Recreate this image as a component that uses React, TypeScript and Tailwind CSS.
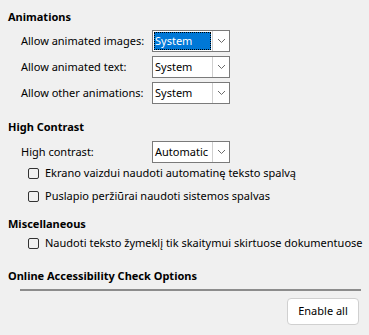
import React from "react";

function Chevron() {
  return (
    <svg width="9" height="6" viewBox="0 0 9 6" className="text-[#6b6b6b]">
      <path d="M1 1l3.5 3.5L8 1" fill="none" stroke="currentColor" strokeWidth="1" />
    </svg>
  );
}

function Combo({ value, focused }: { value: string; focused?: boolean }) {
  return (
    <div className="flex h-[22px] w-[78px] border border-[#7a7a7a] bg-white">
      <div className="flex-1 p-[1px]">
        <div
          className={
            focused
              ? "h-full bg-[#0078d7] text-white outline-1 outline-dotted outline-black -outline-offset-1 pl-[1px] leading-[18px]"
              : "h-full pl-[1px] leading-[18px]"
          }
        >
          {value}
        </div>
      </div>
      <div className="flex w-[17px] items-center justify-center border-l border-[#cfcfcf]">
        <Chevron />
      </div>
    </div>
  );
}

function Check({ label }: { label: string }) {
  return (
    <div className="flex h-[20px] items-center gap-[6px] pl-[20px] whitespace-nowrap">
      <div className="h-[11px] w-[11px] shrink-0 rounded-[2px] border border-[#333]" />
      <span>{label}</span>
    </div>
  );
}

function Heading({ children, className }: { children: React.ReactNode; className?: string }) {
  return <div className={"h-[16px] leading-[16px] font-bold " + (className ?? "")}>{children}</div>;
}

export default function App() {
  const rows = [
    ["Allow animated images:", "System", true],
    ["Allow animated text:", "System", false],
    ["Allow other animations:", "System", false],
  ] as const;

  return (
    <div
      className="flex h-[335px] w-[369px] flex-col bg-[#f0f0f0] pl-[8px] pt-[9px] pr-[10px] text-[11px] text-black"
      style={{ fontFamily: '"Noto Sans", sans-serif' }}
    >
      <Heading>Animations</Heading>
      <div className="mt-[5px] flex flex-col gap-[4px]">
        {rows.map(([label, value, focused]) => (
          <div key={label} className="flex items-center">
            <span className="w-[144px] pl-[13px]">{label}</span>
            <Combo value={value} focused={focused} />
          </div>
        ))}
      </div>

      <Heading className="mt-[15px]">High Contrast</Heading>
      <div className="mt-[6px] flex items-center">
        <span className="w-[144px] pl-[13px]">High contrast:</span>
        <Combo value="Automatic" />
      </div>
      <Check label="Ekrano vaizdui naudoti automatinę teksto spalvą" />
      <div className="mt-[3px]">
        <Check label="Puslapio peržiūrai naudoti sistemos spalvas" />
      </div>

      <Heading className="mt-[10px]">Miscellaneous</Heading>
      <div className="mt-[1px]">
        <Check label="Naudoti teksto žymeklį tik skaitymui skirtuose dokumentuose" />
      </div>

      <Heading className="mt-[15px]">Online Accessibility Check Options</Heading>
      <div className="ml-[12px] mr-[-2px] mt-[5px] h-[2px] bg-[#8c8c8c]" />
      <div className="mt-[7px] flex justify-end">
        <button className="h-[27px] w-[72px] rounded-[4px] border border-[#d0d0d0] bg-white">
          Enable all
        </button>
      </div>
    </div>
  );
}
